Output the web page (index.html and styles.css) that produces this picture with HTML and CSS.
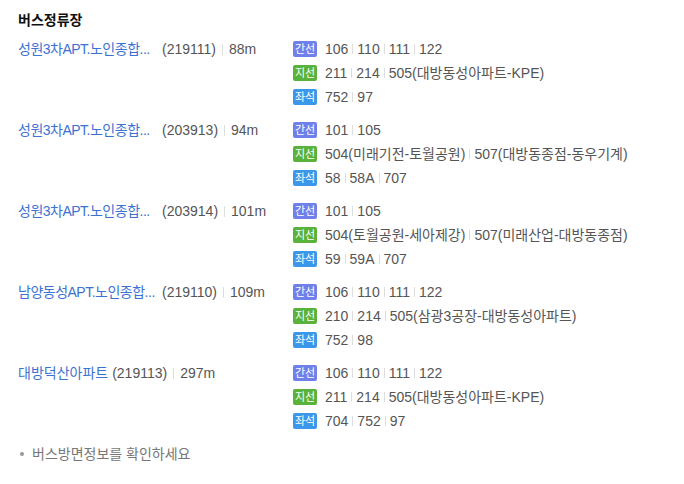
FILE: index.html
```html
<!DOCTYPE html>
<html lang="ko">
<head>
<meta charset="utf-8">
<link rel="stylesheet" href="styles.css">
</head>
<body>
<div class="wrap">
  <h3 class="title">버스정류장</h3>
  <ul class="stops">
    <li class="stop">
      <div class="info"><a class="name fixed" title="성원3차APT.노인종합복지관">성원3차APT.노인종합...</a><span class="id">(219111)</span><span class="bar"></span><span class="dist">88m</span></div>
      <div class="routes">
        <div class="line"><span class="badge trunk">간선</span><span>106</span><span class="bar"></span><span>110</span><span class="bar"></span><span>111</span><span class="bar"></span><span>122</span></div>
        <div class="line"><span class="badge branch">지선</span><span>211</span><span class="bar"></span><span>214</span><span class="bar"></span><span>505(대방동성아파트-KPE)</span></div>
        <div class="line"><span class="badge seat">좌석</span><span>752</span><span class="bar"></span><span>97</span></div>
      </div>
    </li>
    <li class="stop">
      <div class="info"><a class="name fixed" title="성원3차APT.노인종합복지관">성원3차APT.노인종합...</a><span class="id">(203913)</span><span class="bar"></span><span class="dist">94m</span></div>
      <div class="routes">
        <div class="line"><span class="badge trunk">간선</span><span>101</span><span class="bar"></span><span>105</span></div>
        <div class="line"><span class="badge branch">지선</span><span>504(미래기전-토월공원)</span><span class="bar"></span><span>507(대방동종점-동우기계)</span></div>
        <div class="line"><span class="badge seat">좌석</span><span>58</span><span class="bar"></span><span>58A</span><span class="bar"></span><span>707</span></div>
      </div>
    </li>
    <li class="stop">
      <div class="info"><a class="name fixed" title="성원3차APT.노인종합복지관">성원3차APT.노인종합...</a><span class="id">(203914)</span><span class="bar"></span><span class="dist">101m</span></div>
      <div class="routes">
        <div class="line"><span class="badge trunk">간선</span><span>101</span><span class="bar"></span><span>105</span></div>
        <div class="line"><span class="badge branch">지선</span><span>504(토월공원-세아제강)</span><span class="bar"></span><span>507(미래산업-대방동종점)</span></div>
        <div class="line"><span class="badge seat">좌석</span><span>59</span><span class="bar"></span><span>59A</span><span class="bar"></span><span>707</span></div>
      </div>
    </li>
    <li class="stop">
      <div class="info"><a class="name fixed" title="남양동성APT.노인종합복지관">남양동성APT.노인종합...</a><span class="id">(219110)</span><span class="bar"></span><span class="dist">109m</span></div>
      <div class="routes">
        <div class="line"><span class="badge trunk">간선</span><span>106</span><span class="bar"></span><span>110</span><span class="bar"></span><span>111</span><span class="bar"></span><span>122</span></div>
        <div class="line"><span class="badge branch">지선</span><span>210</span><span class="bar"></span><span>214</span><span class="bar"></span><span>505(삼광3공장-대방동성아파트)</span></div>
        <div class="line"><span class="badge seat">좌석</span><span>752</span><span class="bar"></span><span>98</span></div>
      </div>
    </li>
    <li class="stop">
      <div class="info"><a class="name">대방덕산아파트</a><span class="id">(219113)</span><span class="bar"></span><span class="dist">297m</span></div>
      <div class="routes">
        <div class="line"><span class="badge trunk">간선</span><span>106</span><span class="bar"></span><span>110</span><span class="bar"></span><span>111</span><span class="bar"></span><span>122</span></div>
        <div class="line"><span class="badge branch">지선</span><span>211</span><span class="bar"></span><span>214</span><span class="bar"></span><span>505(대방동성아파트-KPE)</span></div>
        <div class="line"><span class="badge seat">좌석</span><span>704</span><span class="bar"></span><span>752</span><span class="bar"></span><span>97</span></div>
      </div>
    </li>
  </ul>
  <p class="note">버스방면정보를 확인하세요</p>
</div>
</body>
</html>
```
FILE: styles.css
```css
* { box-sizing: border-box; }
html, body { margin: 0; padding: 0; background: #fff; }
body {
  font-family: "Liberation Sans", "Noto Sans CJK KR", sans-serif;
  font-size: 14px;
  color: #555;
}
.wrap { padding: 8px 18px 0 18px; }
.title {
  margin: 0 0 5px 0;
  font-size: 14px;
  font-weight: bold;
  line-height: 24px;
  color: #111;
}
.stops { list-style: none; margin: 0; padding: 0; }
.stop {
  display: flex;
  margin-bottom: 9px;
}
.info {
  width: 275px;
  flex: none;
  display: flex;
  align-items: center;
  height: 24px;
  line-height: 24px;
  white-space: nowrap;
}
.name {
  color: #3d72d2;
  text-decoration: none;
  margin-right: 4px;
}
.name.fixed {
  flex: none;
  min-width: 140px;
  letter-spacing: -0.5px;
}
.id, .dist { color: #555; }
.bar {
  display: inline-block;
  width: 1px;
  height: 11px;
  background: #ddd;
  margin: 0 6px;
}
.routes { display: flex; flex-direction: column; }
.line {
  display: flex;
  align-items: center;
  height: 24px;
  line-height: 24px;
  white-space: nowrap;
  color: #555;
}
.line .bar { margin: 0 4px; height: 10px; }
.badge {
  display: inline-block;
  width: 24px;
  height: 16px;
  line-height: 16px;
  border-radius: 2px;
  color: #fff;
  font-size: 11px;
  text-align: center;
  margin-right: 8px;
}
.badge.trunk { background: #6f80ea; }
.badge.branch { background: #59b23a; }
.badge.seat { background: #3b97e9; }
.note {
  margin: 0;
  line-height: 24px;
  color: #777;
  display: flex;
  align-items: center;
}
.note::before {
  content: "";
  width: 4px;
  height: 4px;
  border-radius: 50%;
  background: #999;
  margin: 0 8px 0 2px;
}
```
